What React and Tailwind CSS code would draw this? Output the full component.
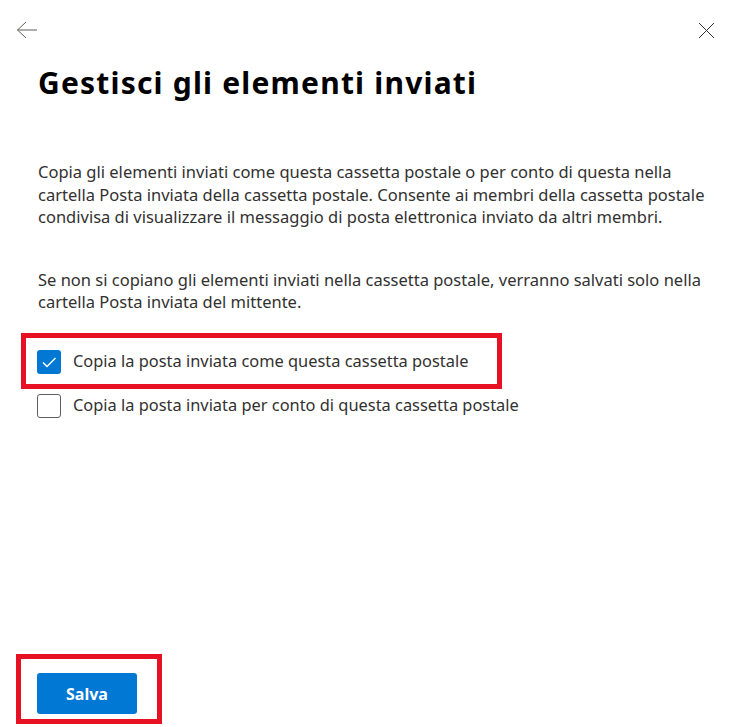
import { useState } from 'react';

const Checkbox = ({ checked, onChange, label, highlight }) => (
  <label className="relative flex items-center gap-3 h-6 cursor-pointer select-none">
    <span
      className={
        checked
          ? 'flex items-center justify-center w-6 h-6 rounded-[3px] bg-[#0078d4]'
          : 'flex items-center justify-center w-6 h-6 rounded-[3px] border border-[#605e5c] bg-white'
      }
    >
      {checked && (
        <svg width="24" height="24" viewBox="0 0 24 24" fill="none">
          <path d="M6 12.5 L10 16.5 L18.5 8" stroke="white" strokeWidth="1.4" />
        </svg>
      )}
    </span>
    <input type="checkbox" className="hidden" checked={checked} onChange={onChange} />
    <span className="text-[16.4px] leading-[22.5px] text-[#323130] whitespace-nowrap">{label}</span>
    {highlight && (
      <span className="absolute left-[-16px] top-[-17px] w-[481px] h-[56px] border-[5px] border-[#e81123] pointer-events-none" />
    )}
  </label>
);

export default function App() {
  const [asMailbox, setAsMailbox] = useState(true);
  const [onBehalf, setOnBehalf] = useState(false);

  return (
    <div className="w-[729px] h-[727px] bg-white flex flex-col font-['Noto_Sans',sans-serif] overflow-hidden">
      <div className="h-[60px] flex items-center justify-between pl-[16px] pr-[14px]">
        <button className="w-[24px] h-[20px] flex items-center">
          <svg width="24" height="20" viewBox="0 0 24 20" fill="none">
            <path d="M10 2 L1.5 10 L10 18 M1.5 10 H21" stroke="#605e5c" strokeWidth="1" />
          </svg>
        </button>
        <button className="w-[17px] h-[17px] flex items-center">
          <svg width="17" height="17" viewBox="0 0 17 17" fill="none">
            <path d="M1 1 L16 16 M16 1 L1 16" stroke="#323130" strokeWidth="1" />
          </svg>
        </button>
      </div>

      <div className="px-[38px]">
        <h1 className="mt-[5px] text-[30px] leading-[36px] font-bold tracking-[1.2px] text-black whitespace-nowrap">
          Gestisci gli elementi inviati
        </h1>

        <p className="mt-[60px] text-[16.5px] leading-[22.5px] text-[#323130] whitespace-nowrap">
          Copia gli elementi inviati come questa cassetta postale o per conto di questa nella
          <br />
          cartella Posta inviata della cassetta postale. Consente ai membri della cassetta postale
          <br />
          condivisa di visualizzare il messaggio di posta elettronica inviato da altri membri.
        </p>

        <p className="mt-[40px] text-[16.5px] leading-[22.5px] text-[#323130] whitespace-nowrap">
          Se non si copiano gli elementi inviati nella cassetta postale, verranno salvati solo nella
          <br />
          cartella Posta inviata del mittente.
        </p>

        <div className="mt-[36px] ml-[-1px] flex flex-col gap-5">
          <Checkbox
            checked={asMailbox}
            onChange={() => setAsMailbox(!asMailbox)}
            label="Copia la posta inviata come questa cassetta postale"
            highlight
          />
          <Checkbox
            checked={onBehalf}
            onChange={() => setOnBehalf(!onBehalf)}
            label="Copia la posta inviata per conto di questa cassetta postale"
          />
        </div>
      </div>

      <div className="mt-auto pb-[13px] px-[37px]">
        <div className="relative w-[100px]">
          <button className="w-[100px] h-[41px] rounded-[3px] bg-[#0078d4] text-white text-[16px] font-bold">
            Salva
          </button>
          <span className="absolute left-[-21px] top-[-19px] w-[146px] h-[70px] border-[5px] border-[#e81123] pointer-events-none" />
        </div>
      </div>
    </div>
  );
}
